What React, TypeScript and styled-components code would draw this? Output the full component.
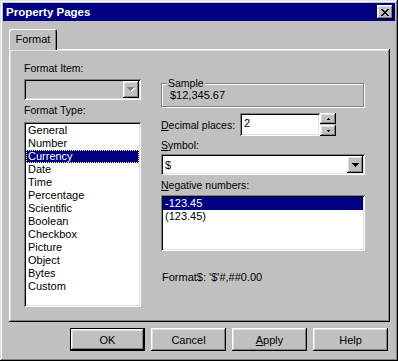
import React from 'react'
import styled, { createGlobalStyle } from 'styled-components'

const GlobalStyle = createGlobalStyle`
  html, body {
    margin: 0;
    padding: 0;
    background: #c0c0c0;
  }
  body {
    font-family: "Liberation Sans", Arial, sans-serif;
    font-size: 10.5px;
    color: #000;
  }
`

const raised = `
  box-shadow: inset -1px -1px #000, inset 1px 1px #fff,
    inset -2px -2px #808080, inset 2px 2px #dfdfdf;
`

const sunken = `
  box-shadow: inset 1px 1px #808080, inset -1px -1px #fff,
    inset 2px 2px #000, inset -2px -2px #dfdfdf;
`

const Window = styled.div`
  width: 398px;
  height: 361px;
  box-sizing: border-box;
  padding: 3px;
  background: #c0c0c0;
  display: flex;
  flex-direction: column;
  box-shadow: inset -1px -1px #000, inset 1px 1px #dfdfdf,
    inset -2px -2px #808080, inset 2px 2px #fff;
`

const TitleBar = styled.div`
  height: 18px;
  background: #000080;
  display: flex;
  align-items: flex-start;
  justify-content: space-between;
  padding: 0 2px 0 3px;
`

const Title = styled.span`
  color: #fff;
  font-weight: 700;
  font-size: 11.5px;
  line-height: 18px;
`

const CloseButton = styled.button`
  width: 16px;
  height: 14px;
  margin-top: 2px;
  padding: 0;
  border: 0;
  background: #c0c0c0;
  display: flex;
  align-items: center;
  justify-content: center;
  ${raised}
`

const Body = styled.div`
  padding: 8px 6px 0 6px;
  display: flex;
  flex-direction: column;
`

const TabStrip = styled.div`
  display: flex;
  z-index: 1;
  margin-bottom: -1px;
`

const Tab = styled.div`
  width: 48px;
  height: 21px;
  box-sizing: border-box;
  background: #c0c0c0;
  border-radius: 2px 2px 0 0;
  display: flex;
  align-items: center;
  justify-content: center;
  padding-bottom: 1px;
  font-size: 11px;
  box-shadow: inset 1px 1px #fff, inset -1px 0 #000, inset -2px 0 #808080;
`

const Panel = styled.div`
  width: 381px;
  height: 273px;
  box-sizing: border-box;
  padding: 13px 0 0 15px;
  display: grid;
  grid-template-columns: 117px 204px;
  column-gap: 20px;
  align-items: start;
  ${raised}
`

const Column = styled.div`
  display: flex;
  flex-direction: column;
`

const FieldLabel = styled.div<{ $gap?: number }>`
  height: 13px;
  line-height: 13px;
  margin-top: ${(p) => p.$gap ?? 0}px;
  white-space: nowrap;
`

const Key = styled.span`
  text-decoration: underline;
`

const Combo = styled.div<{ $disabled?: boolean; $height: number; $gap: number }>`
  height: ${(p) => p.$height}px;
  margin-top: ${(p) => p.$gap}px;
  box-sizing: border-box;
  padding: 2px;
  display: flex;
  align-items: stretch;
  background: ${(p) => (p.$disabled ? '#c0c0c0' : '#fff')};
  ${sunken}
`

const ComboText = styled.div`
  flex: 1;
  padding-left: 2px;
  display: flex;
  align-items: center;
  font-size: 11px;
`

const DropButton = styled.div`
  width: 16px;
  background: #c0c0c0;
  display: flex;
  align-items: center;
  justify-content: center;
  ${raised}
`

const ListBox = styled.div<{ $height: number; $gap: number }>`
  height: ${(p) => p.$height}px;
  margin-top: ${(p) => p.$gap}px;
  box-sizing: border-box;
  padding: 2px;
  background: #fff;
  ${sunken}
`

const ListItem = styled.div<{ $selected?: boolean; $focused?: boolean }>`
  height: 13px;
  line-height: 13px;
  padding-left: 2px;
  box-sizing: border-box;
  font-size: 11px;
  color: ${(p) => (p.$selected ? '#fff' : '#000')};
  background: ${(p) => (p.$selected ? '#000080' : 'transparent')};
  outline: ${(p) => (p.$focused ? '1px dotted #ffff80' : 'none')};
  outline-offset: -1px;
`

const GroupBox = styled.div`
  position: relative;
  height: 24px;
  margin-top: 21px;
  width: 203px;
  box-sizing: border-box;
  border: 1px solid #808080;
  box-shadow: inset 1px 1px #fff, 1px 1px #fff;
  padding-left: 8px;
  display: flex;
  align-items: center;
  font-size: 11px;
`

const Legend = styled.span`
  position: absolute;
  top: -7px;
  left: 5px;
  padding: 0 1px;
  line-height: 13px;
  font-size: 10.5px;
  background: #c0c0c0;
`

const SpinRow = styled.div`
  height: 23px;
  margin-top: 6px;
  display: flex;
  align-items: stretch;
`

const SpinLabel = styled.div`
  width: 79px;
  display: flex;
  align-items: center;
  white-space: nowrap;
`

const EditBox = styled.div`
  width: 80px;
  box-sizing: border-box;
  padding: 2px 0 0 4px;
  background: #fff;
  line-height: 17px;
  font-size: 11px;
  ${sunken}
`

const Spinner = styled.div`
  width: 16px;
  display: flex;
  flex-direction: column;
  gap: 1px;
`

const SpinButton = styled.div`
  flex: 1;
  background: #c0c0c0;
  display: flex;
  align-items: center;
  justify-content: center;
  ${raised}
`

const FormatText = styled.div`
  margin-top: 20px;
  height: 13px;
  line-height: 13px;
  padding-left: 1px;
  font-size: 11px;
`

const ButtonRow = styled.div`
  display: flex;
  justify-content: flex-end;
  gap: 6px;
  margin: 6px 1px 0 0;
`

const PushButton = styled.button<{ $default?: boolean }>`
  width: 75px;
  height: 23px;
  padding: 0;
  border: 0;
  background: #c0c0c0;
  font: inherit;
  font-size: 11px;
  color: #000;
  ${(p) =>
    p.$default
      ? `box-shadow: inset 0 0 0 1px #000, inset -2px -2px #000, inset 2px 2px #fff,
          inset -3px -3px #808080, inset 3px 3px #dfdfdf;`
      : raised}
`

const pixelRects = (rows: string[], fill: string, dx = 0, dy = 0) =>
  rows.flatMap((row, y) =>
    row.split('').map((c, x) =>
      c === '#' ? <rect key={`${fill}-${x}-${y}`} x={x + dx} y={y + dy} width={1} height={1} fill={fill} /> : null
    )
  )

const closeGlyph = ['##....##', '.##..##.', '..####..', '...##...', '..####..', '.##..##.', '##....##']
const downGlyph = ['#######', '.#####.', '..###..', '...#...']
const smallUp = ['.#.', '###']
const smallDown = ['###', '.#.']

const PixelIcon = ({ rows, fill = '#000', shadow }: { rows: string[]; fill?: string; shadow?: boolean }) => (
  <svg
    width={rows[0].length + (shadow ? 1 : 0)}
    height={rows.length + (shadow ? 1 : 0)}
    shapeRendering="crispEdges"
  >
    {shadow && pixelRects(rows, '#fff', 1, 1)}
    {pixelRects(rows, fill)}
  </svg>
)

const formatTypes = [
  'General',
  'Number',
  'Currency',
  'Date',
  'Time',
  'Percentage',
  'Scientific',
  'Boolean',
  'Checkbox',
  'Picture',
  'Object',
  'Bytes',
  'Custom',
]

const negatives = ['-123.45', '(123.45)']

export default function App() {
  return (
    <>
      <GlobalStyle />
      <Window>
        <TitleBar>
          <Title>Property Pages</Title>
          <CloseButton aria-label="Close">
            <PixelIcon rows={closeGlyph} />
          </CloseButton>
        </TitleBar>
        <Body>
          <TabStrip>
            <Tab>Format</Tab>
          </TabStrip>
          <Panel>
            <Column>
              <FieldLabel>Format Item:</FieldLabel>
              <Combo $disabled $height={21} $gap={4}>
                <ComboText />
                <DropButton>
                  <PixelIcon rows={downGlyph} fill="#808080" shadow />
                </DropButton>
              </Combo>
              <FieldLabel $gap={4}>Format Type:</FieldLabel>
              <ListBox $height={185} $gap={5}>
                {formatTypes.map((t) => (
                  <ListItem key={t} $selected={t === 'Currency'} $focused={t === 'Currency'}>
                    {t}
                  </ListItem>
                ))}
              </ListBox>
            </Column>
            <Column>
              <GroupBox>
                <Legend>Sample</Legend>
                $12,345.67
              </GroupBox>
              <SpinRow>
                <SpinLabel>
                  <span>
                    <Key>D</Key>ecimal places:
                  </span>
                </SpinLabel>
                <EditBox>2</EditBox>
                <Spinner>
                  <SpinButton>
                    <PixelIcon rows={smallUp} />
                  </SpinButton>
                  <SpinButton>
                    <PixelIcon rows={smallDown} />
                  </SpinButton>
                </Spinner>
              </SpinRow>
              <FieldLabel $gap={3}>
                <Key>S</Key>ymbol:
              </FieldLabel>
              <Combo $height={21} $gap={2}>
                <ComboText>$</ComboText>
                <DropButton>
                  <PixelIcon rows={downGlyph} />
                </DropButton>
              </Combo>
              <FieldLabel $gap={4}>
                <Key>N</Key>egative numbers:
              </FieldLabel>
              <ListBox $height={56} $gap={3}>
                {negatives.map((n, i) => (
                  <ListItem key={n} $selected={i === 0}>
                    {n}
                  </ListItem>
                ))}
              </ListBox>
              <FormatText>Format$: &apos;$&apos;#,##0.00</FormatText>
            </Column>
          </Panel>
          <ButtonRow>
            <PushButton $default>OK</PushButton>
            <PushButton>Cancel</PushButton>
            <PushButton>
              <Key>A</Key>pply
            </PushButton>
            <PushButton>Help</PushButton>
          </ButtonRow>
        </Body>
      </Window>
    </>
  )
}
